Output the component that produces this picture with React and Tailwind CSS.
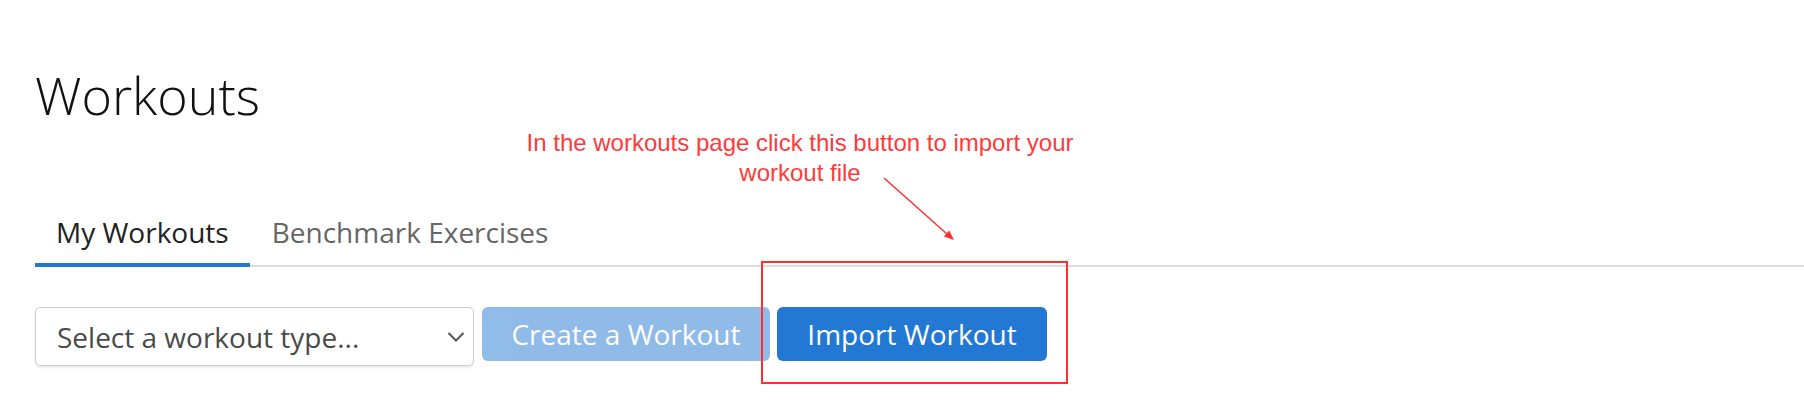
export default function App() {
  return (
    <div className="relative w-full h-[418px] bg-white overflow-hidden" style={{ fontFamily: '"Open Sans", "Noto Sans", sans-serif' }}>
      <div className="pl-[35px]">
        <h1 className="mt-[64px] text-[52px] leading-[62px] font-light text-[#111]">Workouts</h1>

        <div className="mt-[86px] flex border-b-2 border-[#dddddd]">
          <div className="-mb-[2px] px-[21px] pb-[11px] border-b-4 border-[#2176d2] text-[28px] leading-[40px] text-[#222]">
            My Workouts
          </div>
          <div className="-mb-[2px] px-[22px] pb-[11px] border-b-4 border-transparent text-[28px] leading-[40px] text-[#666]">
            Benchmark Exercises
          </div>
        </div>

        <div className="mt-[40px] flex items-start">
          <div className="w-[439px] h-[59px] flex items-center justify-between pl-[21px] pr-[8px] border border-[#cccccc] rounded-[5px] bg-white shadow-[0_2px_2px_rgba(0,0,0,0.08)]">
            <span className="text-[28px] leading-[40px] text-[#4a4a4a]">Select a workout type...</span>
            <svg width="18" height="12" viewBox="0 0 18 12">
              <path d="M1.5 2 L9 9.5 L16.5 2" fill="none" stroke="#555" strokeWidth="2" />
            </svg>
          </div>
          <button className="ml-[8px] w-[288px] h-[54px] rounded-[6px] bg-[#2378d3] opacity-50 text-white text-[28px] leading-[40px] flex items-center justify-center">
            Create a Workout
          </button>
          <button className="ml-[7px] w-[270px] h-[54px] rounded-[6px] bg-[#2378d3] text-white text-[28px] leading-[40px] flex items-center justify-center">
            Import Workout
          </button>
        </div>
      </div>

      <div
        className="absolute left-[500px] top-[128px] w-[600px] text-center whitespace-nowrap text-[24px] leading-[30px] text-[#ff3a3a]"
        style={{ fontFamily: '"Liberation Sans", Arial, sans-serif' }}
      >
        In the workouts page click this button to import your
        <br />
        workout file
      </div>

      <svg className="absolute left-[870px] top-[170px]" width="100" height="80" viewBox="0 0 100 80">
        <line x1="14" y1="8" x2="77" y2="64" stroke="#ff2f2f" strokeWidth="1.5" />
        <polygon points="84,70 79.2,60.4 73.9,66.4" fill="#ff2f2f" />
      </svg>

      <div className="absolute left-[761px] top-[261px] w-[307px] h-[123px] border-2 border-[#ff2f2f]" />
    </div>
  );
}
